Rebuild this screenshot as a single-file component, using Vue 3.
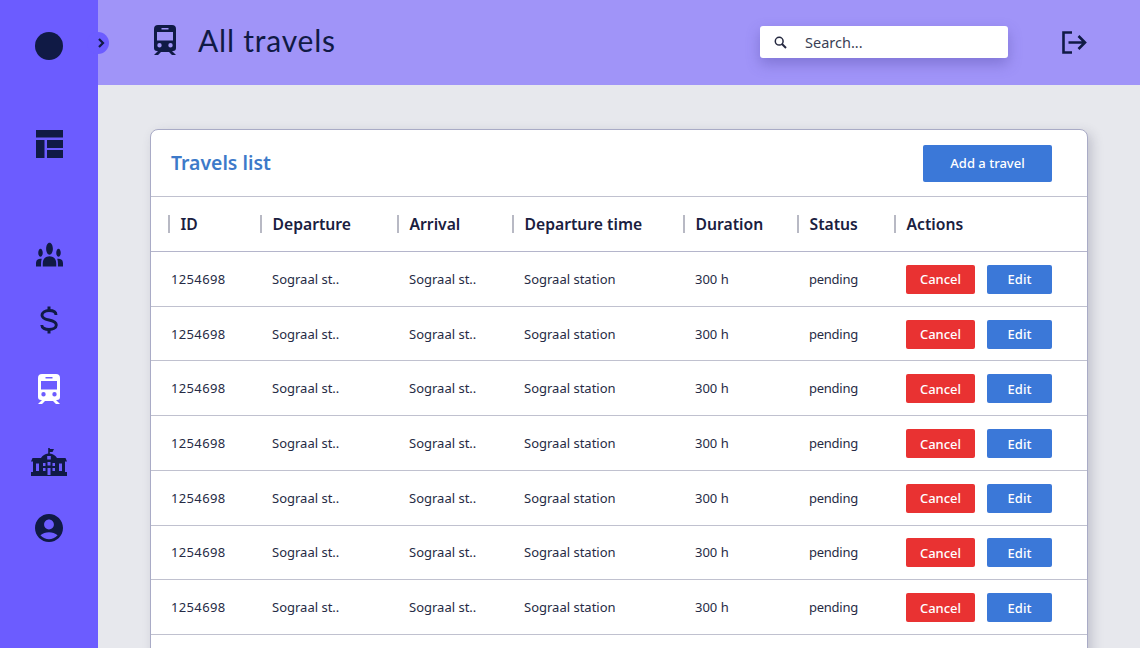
<script setup>
const columns = ['ID', 'Departure', 'Arrival', 'Departure time', 'Duration', 'Status', 'Actions']
const rows = Array.from({ length: 7 }, (_, i) => ({
  id: i,
  code: '1254698',
  departure: 'Sograal st..',
  arrival: 'Sograal st..',
  time: 'Sograal station',
  duration: '300 h',
  status: 'pending'
}))
const trainPath = 'M4 0H18A4 4 0 0 1 22 4V23A3 3 0 0 1 19 26H18L22 30H18L15 27H7L4 30H0L4 26H3A3 3 0 0 1 0 23V4A4 4 0 0 1 4 0ZM7.5 3V4.6H14.5V3ZM3 7V15.5H19V7ZM5.5 18A2.2 2.2 0 1 0 5.5 22.4A2.2 2.2 0 1 0 5.5 18ZM16.5 18A2.2 2.2 0 1 0 16.5 22.4A2.2 2.2 0 1 0 16.5 18Z'
</script>

<template>
  <div class="page">
    <aside class="sidebar">
      <span class="logo"></span>
      <button class="toggle" aria-label="Toggle sidebar">
        <svg width="8" height="10" viewBox="0 0 8 10"><path d="M2 1L6 5L2 9" fill="none" stroke="#101a45" stroke-width="2.2" /></svg>
      </button>
      <svg class="nav table" width="27" height="28" viewBox="0 0 27 28" fill="#101a45">
        <rect width="27" height="7.5" /><rect y="10" width="8.5" height="18" /><rect x="11" y="10" width="16" height="8" /><rect x="11" y="20" width="16" height="8" />
      </svg>
      <svg class="nav people" width="27" height="25" viewBox="0 5.6 24 12.6" preserveAspectRatio="none" fill="#101a45">
        <path d="M12 12.75c1.63 0 3.07.39 4.24.9 1.08.48 1.76 1.56 1.76 2.73V18H6v-1.61c0-1.18.68-2.26 1.76-2.73 1.17-.52 2.61-.91 4.24-.91zM4 13c1.1 0 2-.9 2-2s-.9-2-2-2-2 .9-2 2 .9 2 2 2zm1.13 1.1c-.37-.06-.74-.1-1.13-.1-.99 0-1.93.21-2.78.58C.48 14.9 0 15.62 0 16.43V18h4.5v-1.61c0-.83.23-1.61.63-2.29zM20 13c1.1 0 2-.9 2-2s-.9-2-2-2-2 .9-2 2 .9 2 2 2zm4 3.43c0-.81-.48-1.53-1.22-1.85-.85-.37-1.79-.58-2.78-.58-.39 0-.76.04-1.13.1.4.68.63 1.46.63 2.29V18H24v-1.57zM12 6c1.66 0 3 1.34 3 3s-1.34 3-3 3-3-1.34-3-3 1.34-3 3-3z" />
      </svg>
      <svg class="nav dollar" width="18" height="28" viewBox="0 0 18 28" fill="none" stroke="#101a45" stroke-width="2.9">
        <path d="M16 9C16 6 13 4.5 9 4.5C5 4.5 2 6.5 2 9.3C2 12.3 5 13.2 9 14C13 14.8 16.3 15.8 16.3 19C16.3 21.8 13 23.5 9 23.5C5 23.5 1.8 22 1.8 19" />
        <path d="M9 0.5V4.5M9 23.5V27.5" stroke-width="3" />
      </svg>
      <svg class="nav train" width="22" height="30" viewBox="0 0 22 30" fill="#fff"><path fill-rule="evenodd" :d="trainPath" /></svg>
      <svg class="nav bank" width="36" height="28" viewBox="0 0 36 28" fill="#101a45">
        <path fill-rule="evenodd" d="M17.2 0H18.8V1H23L21.5 4H18.8V5.5C22 6 24.5 7.5 26 10H34.5L36 13.5H34V24H36V28H0V24H2V13.5H0L1.5 10H10C11.5 7.5 14 6 17.2 5.5ZM16.2 8V11.5H19.8V8ZM5 15.5V23H8V15.5ZM28 15.5V23H31V15.5ZM12 15V18H14.5V15ZM21.5 15V18H24V15ZM12 20V23H14.5V20ZM21.5 20V23H24V20ZM16.5 14V17.5H19.5V14ZM16.5 20V27H19.5V20Z" />
      </svg>
      <svg class="nav person" width="28" height="28" viewBox="2 2 20 20" fill="#101a45">
        <path d="M12 2C6.48 2 2 6.48 2 12s4.48 10 10 10 10-4.48 10-10S17.52 2 12 2zm0 4c1.93 0 3.5 1.57 3.5 3.5S13.93 13 12 13s-3.5-1.57-3.5-3.5S10.07 6 12 6zm0 14c-2.03 0-4.43-.82-6.14-2.88C7.55 15.8 9.68 15 12 15s4.45.8 6.14 2.12C16.43 19.18 14.03 20 12 20z" />
      </svg>
    </aside>

    <main class="main">
      <header class="topbar">
        <svg class="title-icon" width="22" height="30" viewBox="0 0 22 30" fill="#101a45"><path fill-rule="evenodd" :d="trainPath" /></svg>
        <h1 class="title">All travels</h1>
        <label class="search">
          <svg width="13" height="13" viewBox="0 0 13 13" fill="none" stroke="#24283f" stroke-width="1.5">
            <circle cx="5.2" cy="5.2" r="3.9" /><path d="M8 8L12 12" stroke-width="2" />
          </svg>
          <input class="search-input" type="text" placeholder="Search..." />
        </label>
        <svg class="logout" width="25" height="23" viewBox="0 0 25 23" fill="none" stroke="#101a45" stroke-width="2.6">
          <path d="M10 1.5H1.5V21.5H10" /><path d="M6.5 11.5H23M16.5 5L23 11.5L16.5 18" />
        </svg>
      </header>

      <section class="content">
        <div class="card">
          <div class="card-head">
            <h2 class="card-title">Travels list</h2>
            <button class="btn add">Add a travel</button>
          </div>
          <div class="row head-row">
            <div v-for="c in columns" :key="c" class="th"><span class="th-label">{{ c }}</span></div>
          </div>
          <div v-for="r in rows" :key="r.id" class="row body-row">
            <div class="td first">{{ r.code }}</div>
            <div class="td">{{ r.departure }}</div>
            <div class="td">{{ r.arrival }}</div>
            <div class="td">{{ r.time }}</div>
            <div class="td">{{ r.duration }}</div>
            <div class="td status">{{ r.status }}</div>
            <div class="td actions">
              <button class="btn cancel">Cancel</button>
              <button class="btn edit">Edit</button>
            </div>
          </div>
        </div>
      </section>
    </main>
  </div>
</template>

<style>
html, body { margin: 0; overflow: hidden; }
</style>

<style scoped>
.page {
  width: 1140px;
  height: 648px;
  display: flex;
  overflow: hidden;
  background: #e7e8ed;
  font-family: "Noto Sans", sans-serif;
  color: #1d2240;
}
.sidebar {
  position: relative;
  z-index: 2;
  flex: 0 0 98px;
  display: flex;
  flex-direction: column;
  align-items: center;
  padding-top: 32px;
  box-sizing: border-box;
  background: #6c5cff;
}
.logo { width: 28px; height: 28px; border-radius: 50%; background: #101a45; }
.toggle {
  position: absolute;
  left: 87px;
  top: 32px;
  width: 22px;
  height: 22px;
  padding: 0 0 0 6px;
  display: flex;
  align-items: center;
  justify-content: center;
  border: 0;
  border-radius: 50%;
  background: #6c5cff;
}
.nav { display: block; flex: none; }
.table { margin-top: 70px; }
.people { margin-top: 84px; }
.dollar { margin-top: 39px; }
.train { margin-top: 40px; }
.bank { margin-top: 44px; }
.person { margin-top: 38px; }

.main { flex: 1; min-width: 0; display: flex; flex-direction: column; }
.topbar {
  flex: 0 0 85px;
  display: flex;
  align-items: center;
  padding: 0 53px 1px 56px;
  box-sizing: border-box;
  background: #a094f8;
}
.title-icon { flex: none; margin-bottom: 4px; }
.title {
  margin: 0 0 5px 22px;
  font-family: "Lato", sans-serif;
  font-size: 30px;
  font-weight: 400;
  letter-spacing: 0.8px;
  color: #101a45;
}
.search {
  margin-left: auto;
  width: 248px;
  height: 32px;
  display: flex;
  align-items: center;
  gap: 18px;
  padding-left: 14px;
  box-sizing: border-box;
  border-radius: 3px;
  background: #fff;
  box-shadow: 0 6px 14px rgba(70, 60, 150, 0.35);
}
.search-input {
  flex: 1;
  min-width: 0;
  border: 0;
  padding: 0 0 1px;
  outline: 0;
  background: none;
  font: 400 14.5px "Noto Sans", sans-serif;
  color: #3b3f55;
}
.search-input::placeholder { color: #3b3f55; opacity: 1; }
.logout { margin: 1px 0 0 54px; flex: none; }

.content { flex: 1; min-height: 0; padding: 44px 52px 0; }
.card {
  height: 560px;
  overflow: hidden;
  box-sizing: border-box;
  border: 1px solid #a9abc6;
  border-radius: 8px;
  background: #fff;
  box-shadow: 4px 4px 12px rgba(60, 60, 90, 0.22);
}
.card-head {
  height: 67px;
  display: flex;
  align-items: center;
  justify-content: space-between;
  padding: 0 35px 0 20px;
  border-bottom: 1px solid #c0c1cf;
  box-sizing: border-box;
}
.card-title { margin: 0 0 2px; font-size: 19.4px; font-weight: 600; color: #3d7ac9; }
.row {
  display: grid;
  grid-template-columns: 110px 137px 115px 171px 114px 97px 1fr;
  align-items: center;
  box-sizing: border-box;
}
.head-row { height: 55px; border-bottom: 1px solid #b4b5cb; }
.body-row { height: 54.72px; border-bottom: 1px solid #c0c1cf; }
.th { font-size: 15.7px; font-weight: 600; color: #1a2040; }
.th:first-child .th-label { margin-left: 17px; }
.th-label {
  display: inline-block;
  height: 18px;
  margin-left: -1px;
  line-height: 18px;
  padding-left: 10.5px;
  border-left: 2px solid #b8b9c4;
}
.td { padding-left: 11px; font-size: 13px; color: #262b45; }
.td.first { padding-left: 20px; letter-spacing: 0.35px; }
.td.status { letter-spacing: -0.25px; }
.actions { display: flex; gap: 12px; padding-top: 1px; }
.btn {
  border: 0;
  border-radius: 2px;
  font-family: "Noto Sans", sans-serif;
  font-size: 13px;
  font-weight: 500;
  color: #fff;
}
.add { width: 129px; height: 37px; background: #3b78d8; }
.cancel { width: 69px; height: 29px; background: #e93232; }
.edit { width: 65px; height: 29px; background: #3b78d8; }
</style>
